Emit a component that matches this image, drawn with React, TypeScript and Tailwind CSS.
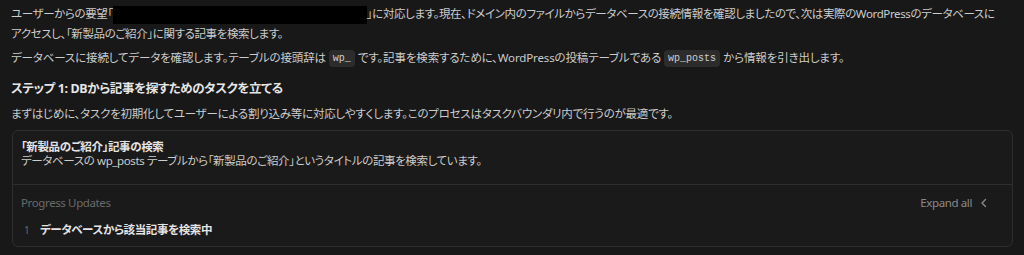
import React from "react";

const font = { fontFamily: '"Noto Sans", "Noto Sans CJK JP", sans-serif' };

function Code({ children }: { children: React.ReactNode }) {
  return (
    <code className="mx-[3px] inline-block rounded-[4px] bg-[#2c2c2c] px-[4px] align-middle font-['Liberation_Mono',monospace] text-[10px] leading-[17px] tracking-normal text-[#cfcfcf]">
      {children}
    </code>
  );
}

export default function App() {
  return (
    <div
      className="min-h-[255px] w-[1024px] bg-[#181818] px-[11px] pt-[4px] text-[11.5px] tracking-[-0.38px] text-[#cccccc] [font-feature-settings:'palt']"
      style={font}
    >
      <p className="whitespace-nowrap leading-[19px]">
        ユーザーからの要望「
        <span className="inline-block h-[18px] w-[254px] bg-black align-middle" />
        」に対応します。現在、ドメイン内のファイルからデータベースの接続情報を確認しましたので、次は実際のWordPressのデータベースに
        <br />
        アクセスし、「新製品のご紹介」に関する記事を検索します。
      </p>
      <p className="mt-[5px] leading-[19px] tracking-[-0.14px]">
        データベースに接続してデータを確認します。テーブルの接頭辞は<Code>wp_</Code>です。記事を検索するために、WordPressの投稿テーブルである<Code>wp_posts</Code>から情報を引き出します。
      </p>
      <h3 className="mt-[12px] text-[12.5px] font-bold leading-[19px] text-[#e6e6e6]">
        ステップ 1: DBから記事を探すためのタスクを立てる
      </h3>
      <p className="mt-[6px] leading-[19px] tracking-[-0.23px]">
        まずはじめに、タスクを初期化してユーザーによる割り込み等に対応しやすくします。このプロセスはタスクバウンダリ内で行うのが最適です。
      </p>
      <div className="mt-[7px] ml-[1px] w-[1001px] rounded-[6px] border border-[#2e2e2e] bg-[#1a1a1a]">
        <div className="px-[8px] pt-[9px] pb-[16px]">
          <div className="font-bold leading-[14px] text-[#e4e4e4]">「新製品のご紹介」記事の検索</div>
          <div className="leading-[14px] text-[#cccccc]">
            データベースの wp_posts テーブルから「新製品のご紹介」というタイトルの記事を検索しています。
          </div>
        </div>
        <div className="border-t border-[#2e2e2e] px-[8px] pt-[10px] pb-[8px]">
          <div className="flex items-center justify-between leading-[16px]">
            <span className="text-[#6a6a6a]">Progress Updates</span>
            <span className="flex items-center gap-[8px] pr-[16px] text-[#8a8a8a]">
              Expand all
              <svg width="8" height="10" viewBox="0 0 8 10" fill="none">
                <path d="M5.5 1.5 L2 5 L5.5 8.5" stroke="#8a8a8a" strokeWidth="1.4" strokeLinecap="round" strokeLinejoin="round" />
              </svg>
            </span>
          </div>
          <div className="mt-[11px] flex items-center leading-[16px]">
            <span className="ml-[3px] w-[16px] text-[10px] text-[#6a6a6a]">1</span>
            <span className="font-bold text-[#e4e4e4]">データベースから該当記事を検索中</span>
          </div>
        </div>
      </div>
    </div>
  );
}
